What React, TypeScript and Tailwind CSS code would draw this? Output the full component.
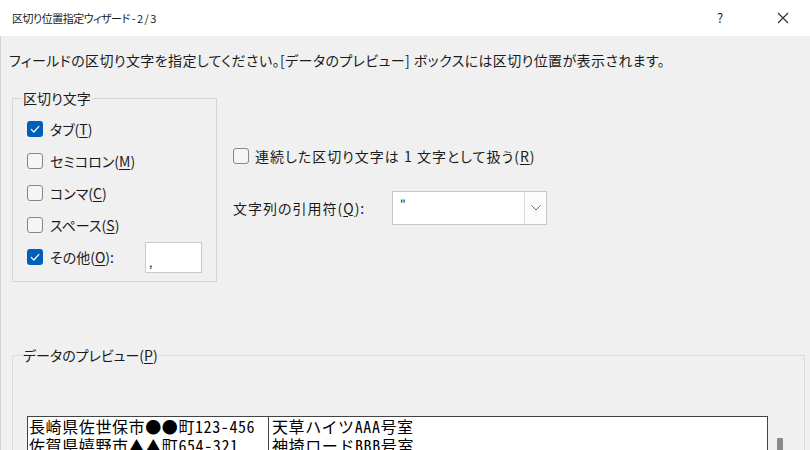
import { ReactNode } from 'react'

const ui = "[font-family:'Noto_Sans_CJK_JP',sans-serif] [font-feature-settings:'palt']"

function Mn({ k }: { k: string }) {
  return <span className="underline underline-offset-2 decoration-1">{k}</span>
}

function Check({ on }: { on: boolean }) {
  if (on) {
    return (
      <span className="flex h-4 w-4 shrink-0 items-center justify-center rounded-[3px] bg-[#005fb8]">
        <svg width="16" height="16" viewBox="0 0 16 16" fill="none">
          <polyline points="4.2,8.4 6.9,11 11.9,5.4" stroke="white" strokeWidth="1.2" strokeLinecap="round" strokeLinejoin="round" />
        </svg>
      </span>
    )
  }
  return <span className="h-4 w-4 shrink-0 rounded-[3px] border border-[#878787] bg-[#f5f5f5]" />
}

function Row({ on, children, extra }: { on: boolean; children: ReactNode; extra?: ReactNode }) {
  return (
    <div className="flex h-8 items-center">
      <Check on={on} />
      <span className="ml-[7px] whitespace-nowrap">{children}</span>
      {extra}
    </div>
  )
}

const preview = [
  ['長崎県佐世保市●●町123-456', '天草ハイツAAA号室'],
  ['佐賀県嬉野市▲▲町654-321', '神埼ロードBBB号室'],
]

export default function App() {
  return (
    <div className={`h-[450px] w-[810px] overflow-hidden bg-[#f0f0f0] text-[#1b1b1b] ${ui}`}>
      <div className="flex h-9 items-center bg-white pl-3 text-[12px]">
        <span className="flex-1 text-[11px] tracking-[-0.5px]">区切り位置指定ウィザード - 2 / 3</span>
        <span className="w-4 text-center text-[13px]">?</span>
        <span className="ml-[47px] mr-[19px] flex w-4 justify-center">
          <svg width="12" height="12" viewBox="0 0 12 12">
            <path d="M1 1 L11 11 M11 1 L1 11" stroke="#2b2b2b" strokeWidth="1.1" />
          </svg>
        </span>
      </div>

      <div className="h-[414px] border-l border-[#d2d2d2] text-[14px]">
        <p className="pl-[8px] pt-[14px] leading-5 tracking-[0.4px] whitespace-nowrap">
          フィールドの区切り文字を指定してください。[データのプレビュー] ボックスには区切り位置が表示されます。
        </p>

        <div className="mt-[18px] flex">
          <fieldset className="ml-[11px] h-[194px] w-[205px] border border-[#d6d6d6]">
            <legend className="ml-[9px] px-[1px] leading-5">区切り文字</legend>
            <div className="pl-[14px] pt-[5px]">
              <Row on={true}>タブ(<Mn k="T" />)</Row>
              <Row on={false}>セミコロン(<Mn k="M" />)</Row>
              <Row on={false}>コンマ(<Mn k="C" />)</Row>
              <Row on={false}>スペース(<Mn k="S" />)</Row>
              <Row
                on={true}
                extra={
                  <span className="ml-auto mr-[14px] flex h-[31px] w-[57px] items-end border border-[#c9c9c9] bg-white pb-[2px] pl-[3px] text-[12px] leading-4">
                    ,
                  </span>
                }
              >
                その他(<Mn k="O" />):
              </Row>
            </div>
          </fieldset>

          <div className="ml-[16px] pt-[58px]">
            <div className="flex h-5 items-center">
              <Check on={false} />
              <span className="ml-[6px] whitespace-nowrap tracking-[1px]">
                連続した区切り文字は 1 文字として扱う(<Mn k="R" />)
              </span>
            </div>
            <div className="mt-[25px] flex h-[34px] items-center">
              <span className="w-[159px] whitespace-nowrap tracking-[1px]">
                文字列の引用符(<Mn k="Q" />):
              </span>
              <div className="flex h-[34px] w-[155px] border border-[#c8c8c8] bg-white">
                <span className="flex-1 pl-[7px] pt-[4px] text-[12px] leading-4">"</span>
                <span className="flex w-[22px] items-center justify-center border-l border-[#dadada] bg-[#fcfcfc]">
                  <svg width="10" height="6" viewBox="0 0 10 6" fill="none">
                    <path d="M0.5 0.5 L5 5 L9.5 0.5" stroke="#6b6b6b" strokeWidth="1" />
                  </svg>
                </span>
              </div>
            </div>
          </div>
        </div>

        <fieldset className="ml-[11px] mt-[63px] h-[200px] w-[793px] border border-[#dcdcdc]">
          <legend className="ml-[9px] px-[1px] leading-5">
            データのプレビュー(<Mn k="P" />)
          </legend>
          <div className="flex pl-[14px] pt-[51px]">
            <div className="w-[741px] border border-[#444] bg-white text-[16px] leading-[19px] tracking-[0.6px] text-black [font-family:'Noto_Sans_CJK_JP',monospace] [font-feature-settings:'hwid']">
              {preview.map((r, i) => (
                <div key={i} className="flex">
                  <div className="w-[241px] border-r border-[#444] pl-[1px] whitespace-nowrap">{r[0]}</div>
                  <div className="pl-[3px] whitespace-nowrap">{r[1]}</div>
                </div>
              ))}
            </div>
            <div className="ml-[9px] mt-[22px] h-[40px] w-[6px] rounded-[1px] bg-[#8a8a8a]" />
          </div>
        </fieldset>
      </div>
    </div>
  )
}
